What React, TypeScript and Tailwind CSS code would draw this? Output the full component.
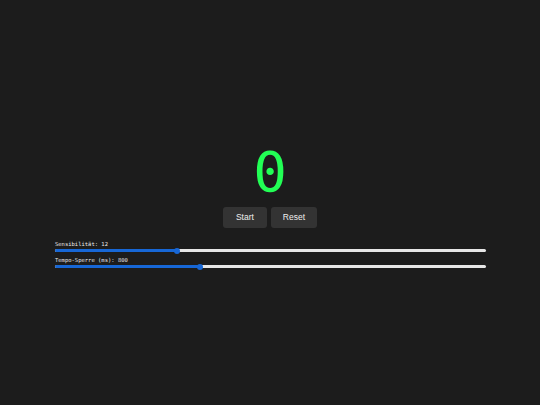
import React, { useState } from 'react';

interface RangeRowProps {
  label: string;
  percent: number;
}

const RangeRow: React.FC<RangeRowProps> = ({ label, percent }) => (
  <div className="flex flex-col">
    <span className="h-[8px] text-[5.5px] leading-[8px] text-[#e8e8e8] font-['DejaVu_Sans_Mono',monospace]">
      {label}
    </span>
    <div className="relative h-[6px] flex items-center">
      <div className="w-full h-[3.5px] rounded-full bg-[#e6e6e6] overflow-hidden">
        <div className="h-full bg-[#1767d6]" style={{ width: `${percent}%` }} />
      </div>
      {/* thumb */}
      <div
        className="absolute top-0 w-[6px] h-[6px] -ml-[3px] rounded-full bg-[#1767d6]"
        style={{ left: `${percent}%` }}
      />
    </div>
  </div>
);

export default function App() {
  const [count] = useState(0);

  return (
    <div className="w-full min-h-screen pt-[4px] bg-[#1c1c1c] flex flex-col items-center justify-center font-['Liberation_Sans',Arial,sans-serif]">
      {/* Counter */}
      <div className="text-[56px] leading-[64px] text-[#22ff55] font-['DejaVu_Sans_Mono',monospace]">
        {count}
      </div>

      {/* Buttons */}
      <div className="flex gap-[4px] mt-[3px]">
        <button className="h-[21px] px-[13px] rounded-[3px] bg-[#333333] text-[8.5px] text-[#eeeeee]">
          Start
        </button>
        <button className="h-[21px] px-[12px] rounded-[3px] bg-[#333333] text-[8.5px] text-[#eeeeee]">
          Reset
        </button>
      </div>

      {/* Controls */}
      <div className="w-[431px] ml-[1px] mt-[12px] flex flex-col gap-[2px]">
        <RangeRow label="Sensibilität: 12" percent={28.3} />
        <RangeRow label="Tempo-Sperre (ms): 800" percent={33.6} />
      </div>
    </div>
  );
}
